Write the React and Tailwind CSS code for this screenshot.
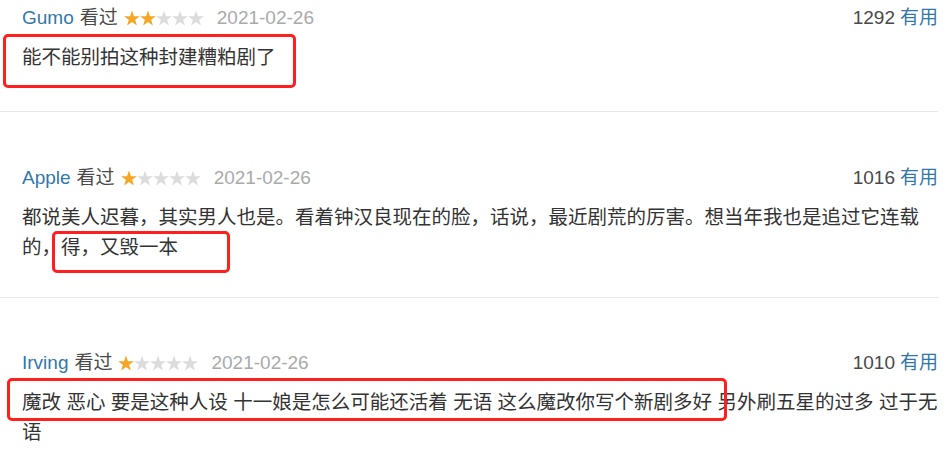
import React from "react";

const STAR =
  "M8 0.5 L9.94 6.13 L15.89 6.24 L11.14 9.82 L12.88 15.51 L8 12.1 L3.12 15.51 L4.86 9.82 L0.11 6.24 L6.06 6.13 Z";

function Stars({ n }) {
  return (
    <span className="inline-flex items-center ml-[6px]">
      {[0, 1, 2, 3, 4].map((i) => (
        <svg key={i} width="16" height="16" viewBox="0 0 16 16">
          <path d={STAR} fill={i < n ? "#f5a623" : "#dcdcdc"} />
        </svg>
      ))}
    </span>
  );
}

function Header({ name, n, count }) {
  return (
    <div className="flex justify-between items-center h-[30px] leading-[30px] text-[19px]">
      <div className="flex items-center">
        <span className="text-[#3377aa]">{name}</span>
        <span className="text-[#494949] ml-[6px]">看过</span>
        <Stars n={n} />
        <span className="text-[#aaaaaa] ml-[13px]">2021-02-26</span>
      </div>
      <div>
        <span className="text-[#494949]">{count}</span>
        <span className="text-[#3377aa] ml-[5px]">有用</span>
      </div>
    </div>
  );
}

export default function App() {
  return (
    <div
      className="relative w-[950px] h-[464px] bg-white overflow-hidden"
      style={{ fontFamily: '"Liberation Sans", "Noto Sans CJK SC", sans-serif' }}
    >
      <div className="w-[938px]">
        <div className="pl-[22px] pt-[3px] pb-[39px] border-b border-[#e8e8e8]">
          <Header name="Gumo" n={2} count="1292" />
          <div className="mt-[9px] text-[19.5px] leading-[30px] text-[#333333] whitespace-nowrap">
            能不能别拍这种封建糟粕剧了
          </div>
        </div>
        <div className="pl-[22px] pt-[51px] pb-[35px] border-b border-[#e8e8e8]">
          <Header name="Apple" n={1} count="1016" />
          <div className="mt-[9px] text-[19.5px] leading-[30px] text-[#333333] whitespace-nowrap">
            都说美人迟暮，其实男人也是。看着钟汉良现在的脸，话说，最近剧荒的厉害。想当年我也是追过它连载
            <br />
            的，得，又毁一本
          </div>
        </div>
        <div className="pl-[22px] pt-[50px]">
          <Header name="Irving" n={1} count="1010" />
          <div className="mt-[9px] text-[19.5px] leading-[30px] text-[#333333] whitespace-nowrap">
            魔改 恶心 要是这种人设 十一娘是怎么可能还活着 无语 这么魔改你写个新剧多好 另外刷五星的过多 过于无
            <br />
            语
          </div>
        </div>
      </div>

      <div className="absolute left-[3px] top-[34px] w-[293px] h-[54px] border-[3px] border-[#ff1f1f] rounded-[5px]" />
      <div className="absolute left-[52px] top-[231px] w-[178px] h-[42px] border-[3px] border-[#ff1f1f] rounded-[5px]" />
      <div className="absolute left-[7px] top-[378px] w-[720px] h-[43px] border-[3px] border-[#ff1f1f] rounded-[5px]" />
    </div>
  );
}
